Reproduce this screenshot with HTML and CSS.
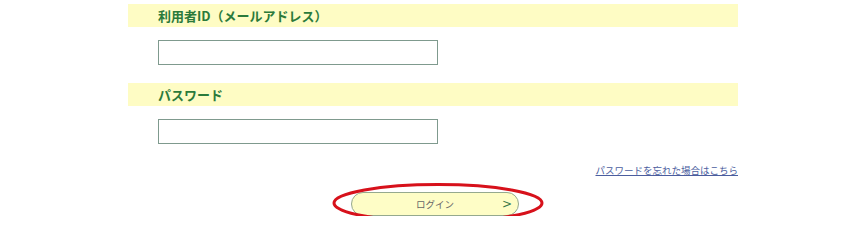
FILE: index.html
```html
<!DOCTYPE html>
<html lang="ja">
<head>
<meta charset="utf-8">
<link rel="stylesheet" href="styles.css">
</head>
<body>
<div class="form">
  <div class="band"><span class="band-label">利用者ID（メールアドレス）</span></div>
  <div class="field"><input class="input" type="text"></div>
  <div class="band band-2"><span class="band-label">パスワード</span></div>
  <div class="field"><input class="input" type="password"></div>
  <div class="link-row"><a class="forgot" href="#">パスワードを忘れた場合はこちら</a></div>
  <div class="btn-row">
    <div class="btn-wrap">
      <button class="login" type="button"><span class="login-text">ログイン</span><span class="arrow">&gt;</span></button>
      <svg class="ring" width="212" height="42" viewBox="0 0 212 42"><ellipse cx="106" cy="21" rx="104" ry="18.5" fill="none" stroke="#d7111b" stroke-width="3"/></svg>
    </div>
  </div>
</div>
</body>
</html>
```
FILE: styles.css
```css
html, body { margin: 0; padding: 0; background: #fff; }
body { font-family: "Noto Sans CJK JP", "Noto Sans", sans-serif; }
.form { width: 610px; margin-left: 128px; padding-top: 4px; display: flex; flex-direction: column; }
.band { height: 23px; background: #fefcc4; display: flex; align-items: center; padding-left: 30px; }
.band-2 { margin-top: 18px; }
.band-label { font-size: 13px; font-weight: bold; color: #2b7a3b; line-height: 1; }
.field { padding-left: 30px; margin-top: 13px; display: flex; }
.input { width: 280px; height: 25px; box-sizing: border-box; border: 1px solid #7f9a8e; background: #fff; margin: 0; padding: 0 4px; }
.link-row { display: flex; justify-content: flex-end; margin-top: 19px; }
.forgot { font-size: 9.5px; color: #4b5d9e; text-decoration: underline; line-height: 14px; }
.btn-row { display: flex; justify-content: center; margin-top: 15px; }
.btn-wrap { position: relative; width: 168px; height: 24px; margin-left: 4px; }
.login { width: 168px; height: 24px; box-sizing: border-box; border: 1px solid #95a98e; border-radius: 12px; background: #fefdc6; display: flex; align-items: center; justify-content: center; position: relative; font-family: "Noto Sans CJK JP", sans-serif; padding: 0; }
.login-text { font-size: 9.5px; color: #666; }
.arrow { position: absolute; right: 6px; top: 3px; font-size: 12px; color: #3b7a4a; font-family: "DejaVu Sans", sans-serif; line-height: 16px; }
.ring { position: absolute; left: -19px; top: -10px; }
```
